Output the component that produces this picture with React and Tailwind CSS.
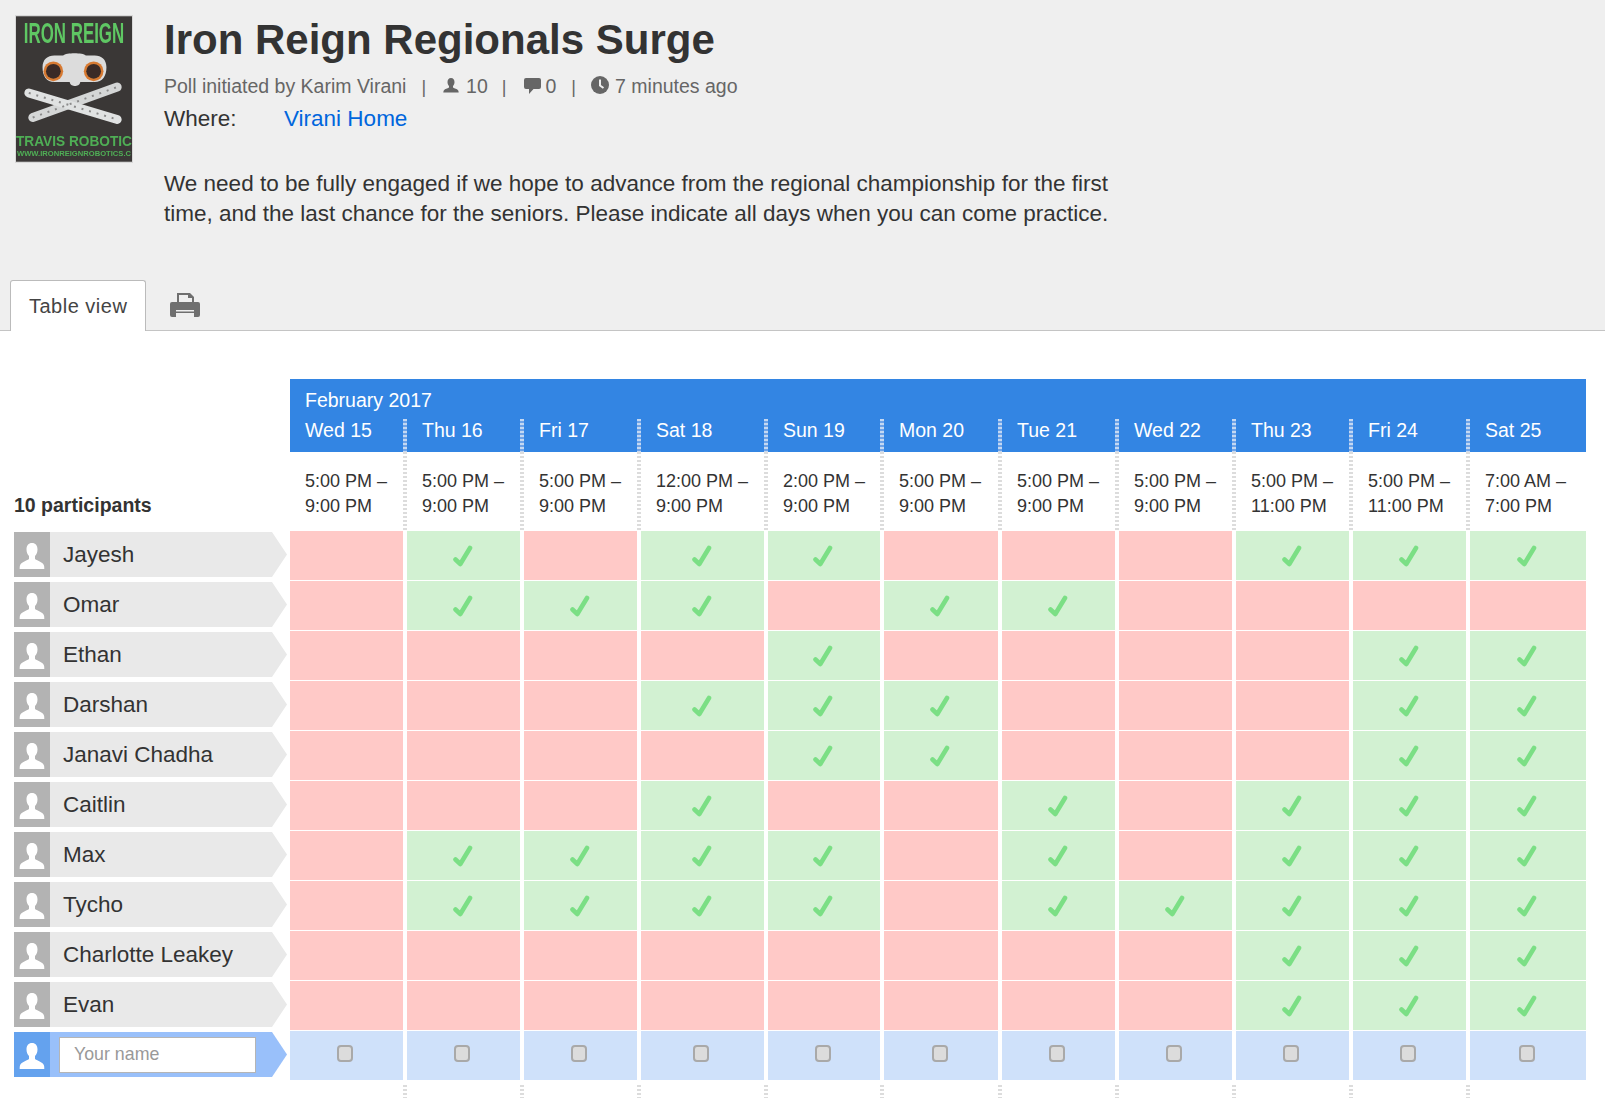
import React from 'react';

const days = ['Wed 15', 'Thu 16', 'Fri 17', 'Sat 18', 'Sun 19', 'Mon 20', 'Tue 21', 'Wed 22', 'Thu 23', 'Fri 24', 'Sat 25'];
const times = [
  ['5:00 PM –', '9:00 PM'],
  ['5:00 PM –', '9:00 PM'],
  ['5:00 PM –', '9:00 PM'],
  ['12:00 PM –', '9:00 PM'],
  ['2:00 PM –', '9:00 PM'],
  ['5:00 PM –', '9:00 PM'],
  ['5:00 PM –', '9:00 PM'],
  ['5:00 PM –', '9:00 PM'],
  ['5:00 PM –', '11:00 PM'],
  ['5:00 PM –', '11:00 PM'],
  ['7:00 AM –', '7:00 PM'],
];
const participants = [
  ['Jayesh', '01011000111'],
  ['Omar', '01110110000'],
  ['Ethan', '00001000011'],
  ['Darshan', '00011100011'],
  ['Janavi Chadha', '00001100011'],
  ['Caitlin', '00010010111'],
  ['Max', '01111010111'],
  ['Tycho', '01111011111'],
  ['Charlotte Leakey', '00000000111'],
  ['Evan', '00000000111'],
];

const Stripe = ({ onBlue }) => (
  <span
    className={
      onBlue
        ? 'absolute -left-1 top-px bottom-0 w-1 bg-[repeating-linear-gradient(to_bottom,#c4d8f2_0,#c4d8f2_2px,#6ea3e8_2px,#6ea3e8_4px)]'
        : 'absolute -left-1 top-0 bottom-0 w-1 bg-[repeating-linear-gradient(to_bottom,#dcdcdc_0,#dcdcdc_2px,#ffffff_2px,#ffffff_4px)]'
    }
  />
);

const Silhouette = () => (
  <svg viewBox="0 0 36 45" className="w-9 h-[45px]">
    <path d="M18 11c-3.500 0-5.500 2.500-5.500 6.500 0 3 1 5 2.500 6.500v3c-2.500 2-8 3-9 6.500-.3 1-.3 2-.3 3.500h24.600c0-1.500 0-2.500-.3-3.500-1-3.500-6.500-4.500-9-6.500v-3c1.500-1.500 2.500-3.500 2.500-6.500 0-4-2-6.500-5.500-6.500z" fill="#fff" />
  </svg>
);

const Check = () => (
  <svg viewBox="0 0 20 22" className="w-5 h-[22px]">
    <path d="M2.500 14.500l4.800 4.500L17 3" fill="none" stroke="#7bdf85" strokeWidth="4.600" strokeLinecap="round" strokeLinejoin="round" />
  </svg>
);

const Logo = () => (
  <svg viewBox="0 0 118 148" className="w-[118px] h-[148px] border border-[#d8d8d8] shrink-0">
    <defs>
      <filter id="soft"><feGaussianBlur stdDeviation="0.6" /></filter>
    </defs>
    <rect width="118" height="148" fill="#3a3736" />
    <g filter="url(#soft)">
      <text transform="translate(59,27) scale(1,1.9)" textAnchor="middle" fill="#5ec764" fontFamily="Liberation Sans, sans-serif" fontWeight="700" fontSize="16" textLength="102" lengthAdjust="spacingAndGlyphs">IRON REIGN</text>
      <path d="M27 52c0-8 5-12 12-12h9c3-3 20-3 23 0h9c7 0 12 4 12 12 0 9-4 15-12 15H67c-1 0-2 0-2 1 0 2-3 3-5 3s-5-1-5-3c0-1-1-1-2-1H39c-8 0-12-6-12-15z" fill="#dcdcdc" />
      <circle cx="38" cy="56" r="10" fill="#d77a33" />
      <circle cx="38" cy="56" r="7.500" fill="#3b2b26" />
      <circle cx="79" cy="56" r="10" fill="#d77a33" />
      <circle cx="79" cy="56" r="7.500" fill="#3b2b26" />
      <path d="M17 103L103 72" stroke="#d4d6d6" strokeWidth="9" strokeLinecap="round" />
      <path d="M13 78L103 105" stroke="#e0e2e2" strokeWidth="9" strokeLinecap="round" />
      <path d="M17 103L103 72M13 78L103 105" stroke="#8a8a8a" strokeWidth="2" strokeDasharray="2 6" fill="none" />
      <text transform="translate(59,132) scale(1,1.1)" textAnchor="middle" fill="#4fae55" fontFamily="Liberation Sans, sans-serif" fontWeight="700" fontSize="13" textLength="118" lengthAdjust="spacingAndGlyphs">TRAVIS ROBOTIC</text>
      <text x="59" y="142" textAnchor="middle" fill="#4fae55" fontFamily="Liberation Sans, sans-serif" fontWeight="700" fontSize="7" textLength="116" lengthAdjust="spacingAndGlyphs">WWW.IRONREIGNROBOTICS.C</text>
    </g>
  </svg>
);

const Divider = ({ className }) => <span className={className}>|</span>;

const Row = ({ name, votes }) => (
  <>
    <div className="pl-[14px] pt-px">
      <div className="flex h-[45px] w-[273px] bg-[#e9e9e9] [clip-path:polygon(0_0,258px_0,100%_50%,258px_100%,0_100%)]">
        <div className="w-9 bg-[#b3b3b3]"><Silhouette /></div>
        <span className="pl-[13px] text-[22.5px] leading-[45px] text-[#333]">{name}</span>
      </div>
    </div>
    {votes.split('').map((v, i) => (
      <div key={i} className={v === '1' ? 'h-[49px] bg-[#d2f1d2] flex items-center justify-center pr-[2px]' : 'h-[49px] bg-[#ffc9c7]'}>
        {v === '1' && <Check />}
      </div>
    ))}
  </>
);

export default function App() {
  return (
    <div className="h-[1098px] overflow-hidden bg-white font-['Liberation_Sans',Arial,sans-serif] text-[#333]">
      <header className="h-[331px] bg-[#efefef] border-b border-[#c4c4c4] flex flex-col justify-between">
        <div className="flex pl-[15px] pt-[15px]">
          <Logo />
          <div className="ml-[31px]">
            <h1 className="mt-px text-[42px] leading-[48px] font-bold text-[#333]">Iron Reign Regionals Surge</h1>
            <div className="mt-[9px] flex items-center h-7 text-[19.5px] text-[#666]">
              <span>Poll initiated by Karim Virani</span>
              <Divider className="ml-[15px] mr-[17px] text-[18px]" />
              <svg viewBox="0 0 16 16" className="w-4 h-4 -mt-[3px]" fill="#666"><path d="M8 0c-2.300 0-3.500 1.700-3.500 4 0 1.600.6 3 1.500 3.900v1.600c-1.700 1-4 1.300-5 2.700-.5.700-.7 1.800-.7 2.300h15.400c0-.5-.2-1.600-.7-2.300-1-1.400-3.300-1.700-5-2.700V7.900c.9-.9 1.500-2.300 1.500-3.900C11.500 1.700 10.300 0 8 0z" /></svg>
              <span className="ml-[7px]">10</span>
              <Divider className="ml-[14px] mr-[17px] text-[18px]" />
              <svg viewBox="0 0 17 16" className="w-[17px] h-4 -mt-[3px]" fill="#666"><path d="M2 0h13a2 2 0 0 1 2 2v7a2 2 0 0 1-2 2H9.500L5 16v-5H2a2 2 0 0 1-2-2V2a2 2 0 0 1 2-2z" /></svg>
              <span className="ml-[5px]">0</span>
              <Divider className="ml-[15px] mr-[15px] text-[18px]" />
              <svg viewBox="0 0 18 18" className="w-[18px] h-[18px] -mt-[5px]"><circle cx="9" cy="9" r="9" fill="#666" /><path d="M9 3.500V9.500l3.500 2.500" fill="none" stroke="#efefef" strokeWidth="2" /></svg>
              <span className="ml-[6px]">7 minutes ago</span>
            </div>
            <div className="flex text-[22.5px] leading-[33px] mt-[1px]">
              <span className="w-[120px]">Where:</span>
              <a className="text-[#0066dd]">Virani Home</a>
            </div>
            <p className="mt-[34px] w-[960px] text-[22.5px] leading-[30px]">
              We need to be fully engaged if we hope to advance from the regional championship for the first time, and the last chance for the seniors. Please indicate all days when you can come practice.
            </p>
          </div>
        </div>
        <div className="flex items-center pl-[10px] -mb-px">
          <div className="h-[51px] w-[136px] bg-white border border-b-0 border-[#bbb] rounded-t-[3px] pl-[18px] text-[20px] leading-[50px] tracking-[0.5px] text-[#444]">Table view</div>
          <svg viewBox="0 0 30 24" className="w-[30px] h-6 ml-6 -mt-[2px]" fill="#6f6f6f">
            <path d="M7 0h13l4 4v6H7z M9 2v7h13V5h-4V2z" fillRule="evenodd" />
            <path d="M2 9h26a2 2 0 0 1 2 2v11a2 2 0 0 1-2 2H2a2 2 0 0 1-2-2V11a2 2 0 0 1 2-2z" />
            <rect x="6" y="17" width="18" height="1.500" fill="#efefef" />
            <rect x="6" y="20" width="18" height="4" fill="#efefef" />
          </svg>
        </div>
      </header>

      <div className="pt-12 grid grid-cols-[286px_113px_113px_113px_123px_112px_114px_113px_113px_113px_113px_116px] gap-x-1 gap-y-px">
        <div className="row-start-1" />
        <div className="col-span-11 grid grid-cols-subgrid bg-[#3385e3] text-white">
          <div className="col-span-11 h-[39px] pl-[15px] pt-[10px] text-[19.5px] leading-[22px]">February 2017</div>
          {days.map((d, i) => (
            <div key={d} className="relative h-[34px] pl-[15px] text-[19.5px] leading-[24px]">
              {i > 0 && <Stripe onBlue />}
              {d}
            </div>
          ))}
        </div>

        <div className="-mt-px flex items-end pl-[14px] pb-[12px] text-[19.5px] leading-[26px] font-bold">10 participants</div>
        {times.map((t, i) => (
          <div key={i} className="relative -mt-px h-[78px] pl-[15px] pt-[17px] text-[18px] leading-[25px]">
            {i > 0 && <Stripe />}
            <div>{t[0]}</div>
            <div>{t[1]}</div>
          </div>
        ))}

        {participants.map(([name, votes]) => (
          <Row key={name} name={name} votes={votes} />
        ))}

        <div className="pl-[14px] pt-px">
          <div className="flex h-[45px] w-[273px] bg-[#99c0fa] [clip-path:polygon(0_0,258px_0,100%_50%,258px_100%,0_100%)]">
            <div className="w-9 bg-[#64a2ee]"><Silhouette /></div>
            <input
              placeholder="Your name"
              className="ml-[9px] mt-[5px] h-[36px] w-[197px] bg-white border border-[#b5b5b5] pl-[14px] pb-[2px] text-[17.8px] outline-none placeholder:text-[#999]"
            />
          </div>
        </div>
        {days.map(d => (
          <div key={d} className="h-[49px] bg-[#cfe1fa] flex items-center justify-center pr-[3px]">
            <span className="block -mt-[5px] w-4 h-[17px] rounded-[4px] bg-[#dcdcdc] border-2 border-[#a9a9a9]" />
          </div>
        ))}

        <div />
        {days.map((d, i) => (
          <div key={d} className="relative h-[18px] mt-[4px]">
            {i > 0 && <Stripe />}
          </div>
        ))}
      </div>
    </div>
  );
}
